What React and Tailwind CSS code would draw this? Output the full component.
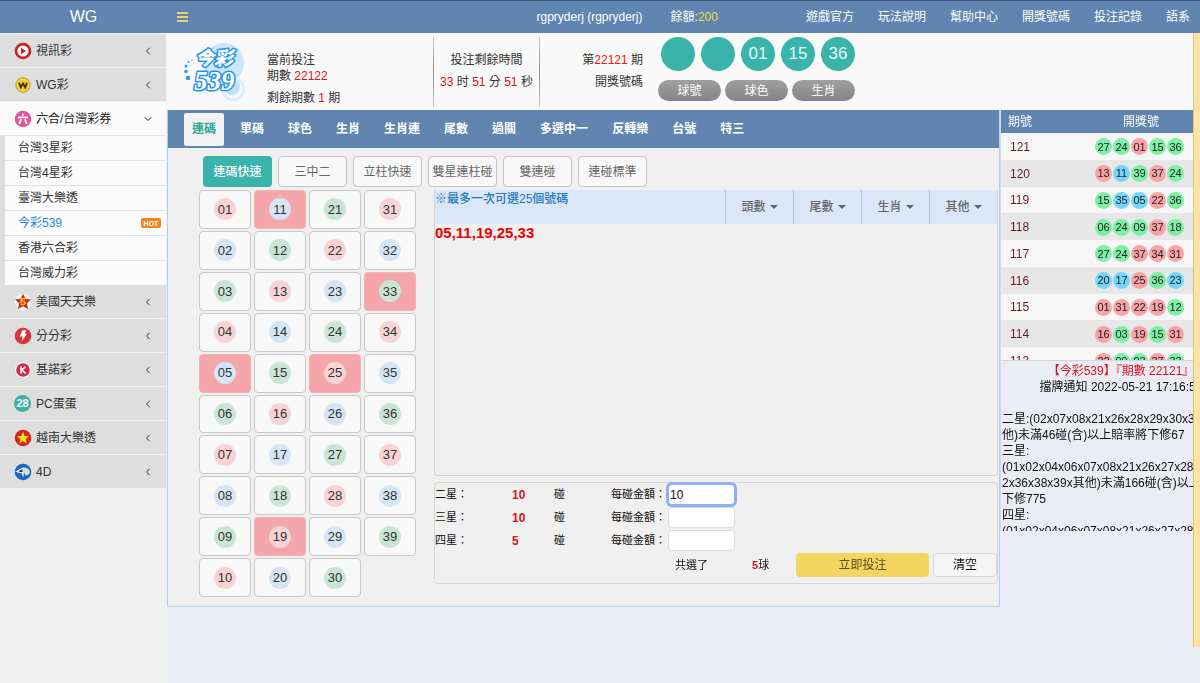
import React, { useState } from "react";
import { FiChevronLeft, FiChevronDown } from "react-icons/fi";

const NAV_LINKS = ["遊戲官方", "玩法說明", "幫助中心", "開獎號碼", "投注記錄", "語系"];

const LOTTERIES = ["台灣3星彩", "台灣4星彩", "臺灣大樂透", "今彩539", "香港六合彩", "台灣威力彩"];

const TABS = ["連碼", "單碼", "球色", "生肖", "生肖連", "尾數", "過關", "多選中一", "反轉樂", "台號", "特三"];

const MODES = ["連碼快速", "三中二", "立柱快速", "雙星連柱碰", "雙連碰", "連碰標準"];

const FILTERS = ["頭數", "尾數", "生肖", "其他"];

const RESULTS = [
  { no: "121", balls: ["27", "24", "01", "15", "36"], colors: "ggrgg" },
  { no: "120", balls: ["13", "11", "39", "37", "24"], colors: "rbgrg" },
  { no: "119", balls: ["15", "35", "05", "22", "36"], colors: "gbbrg" },
  { no: "118", balls: ["06", "24", "09", "37", "18"], colors: "gggrg" },
  { no: "117", balls: ["27", "24", "37", "34", "31"], colors: "ggrrr" },
  { no: "116", balls: ["20", "17", "25", "36", "23"], colors: "bbrgb" },
  { no: "115", balls: ["01", "31", "22", "19", "12"], colors: "rrrrg" },
  { no: "114", balls: ["16", "03", "19", "15", "31"], colors: "rgrgr" },
  { no: "113", balls: ["22", "09", "03", "37", "33"], colors: "rggrg" },
];

const NOTICE = [
  "二星:(02x07x08x21x26x28x29x30x32x其",
  "他)未滿46碰(含)以上賠率將下修67",
  "三星:",
  "(01x02x04x06x07x08x21x26x27x28x3",
  "2x36x38x39x其他)未滿166碰(含)以上賠率將",
  "下修775",
  "四星:",
  "(01x02x04x06x07x08x21x26x27x28x3",
];

const RESULT_COLORS = { r: "bg-[#f9a3a6]", g: "bg-[#7df0a5]", b: "bg-[#74d6fb]" };

// 1 red, 2 blue, 0 green
const BALL_COLORS = ["bg-[#c8e5d5]", "bg-[#f8d3d5]", "bg-[#d5e5f6]"];

const pad = (n) => String(n).padStart(2, "0");

const VideoIcon = () => (
  <svg viewBox="0 0 18 18" className="h-[18px] w-[18px]">
    <circle cx="9" cy="9" r="8.3" fill="#d0201f" />
    <circle cx="9" cy="9" r="5.6" fill="#fff" />
    <path d="M7 5.8 12 9l-5 3.2z" fill="#d0201f" />
  </svg>
);

const WgIcon = () => (
  <svg viewBox="0 0 18 18" className="h-[18px] w-[18px]">
    <circle cx="9" cy="9" r="7.2" fill="#f2c71f" stroke="#c99a14" strokeWidth="1" />
    <circle cx="9" cy="9" r="5.6" fill="none" stroke="#fbe58a" strokeWidth="0.8" />
    <path d="M5 6.6 6.8 11.4 9 7.4l2.2 4L13 6.6" fill="none" stroke="#3a2a08" strokeWidth="1.7" />
  </svg>
);

const SixIcon = () => (
  <svg viewBox="0 0 18 18" className="h-[18px] w-[18px]">
    <circle cx="9" cy="9" r="8.3" fill="#e0579f" />
    <path d="M9 3.4v2.4M4 7.3h10M7.2 9.2l-2 4.6M10.8 9.2l2 4.6" stroke="#fff" strokeWidth="1.7" fill="none" />
  </svg>
);

const StarFiveIcon = () => (
  <svg viewBox="0 0 18 18" className="h-[18px] w-[18px]">
    <circle cx="9" cy="9" r="8" fill="#fff" />
    <path d="m9 .8 2.5 5 5.5.7-4 3.8 1 5.7-5-2.8L4 16l1-5.700-4-3.800 5.500-.7z" fill="#d8261c" />
    <path d="M11.600 5.800H7.400l-.4 3c2-1 4.200-.4 4.100 1.200 0 1.700-2.700 2.100-4.300.9" fill="none" stroke="#f9c31f" strokeWidth="1.6" />
  </svg>
);

const BoltIcon = () => (
  <svg viewBox="0 0 18 18" className="h-[18px] w-[18px]">
    <circle cx="9" cy="9" r="8.3" fill="#d5343a" />
    <path d="M8.4 3.2h4l-1.6 3.6h2.2L7.4 14.8 8.6 9.6H5.6z" fill="#fff" />
  </svg>
);

const KenoIcon = () => (
  <svg viewBox="0 0 18 18" className="h-[18px] w-[18px]">
    <circle cx="9" cy="9" r="8" fill="#fff" />
    <circle cx="9" cy="9" r="6.8" fill="#d92645" />
    <path d="M7 5.6v6.8M11.6 5.6 7.6 9l4 3.4" fill="none" stroke="#fff" strokeWidth="1.7" />
  </svg>
);

const EggIcon = () => (
  <span className="flex h-[17px] w-[17px] items-center justify-center rounded-full bg-[#3ab0a4] text-[11px] leading-none font-bold text-white">
    28
  </span>
);

const VietnamIcon = () => (
  <svg viewBox="0 0 18 18" className="h-[18px] w-[18px]">
    <circle cx="9" cy="9" r="8.3" fill="#d9251f" />
    <path d="m9 2.8 1.6 4.3 4.6.2-3.6 2.8 1.2 4.4L9 12l-3.8 2.5 1.2-4.4-3.6-2.8 4.6-.2z" fill="#ffe411" />
  </svg>
);

const FourDIcon = () => (
  <svg viewBox="0 0 18 18" className="h-[18px] w-[18px]">
    <circle cx="9" cy="9" r="8.3" fill="#1c66bf" />
    <path d="M9.500 4.500c3.800 0 6.300 1.700 6.300 4.300s-2.300 3.600-4.800 3.600v-2H9.500z" fill="#d5dde6" />
    <path d="M9 4.600v8.600M9 5 2.800 8.600 9 10.200" fill="none" stroke="#fff" strokeWidth="1.300" />
    <path d="M8.300 6.500v2.800L4.600 8.400z" fill="#0d2d55" />
  </svg>
);

const TOP_MENU = [
  { name: "視訊彩", Icon: VideoIcon },
  { name: "WG彩", Icon: WgIcon },
];

const BOTTOM_MENU = [
  { name: "美國天天樂", Icon: StarFiveIcon },
  { name: "分分彩", Icon: BoltIcon },
  { name: "基諾彩", Icon: KenoIcon },
  { name: "PC蛋蛋", Icon: EggIcon },
  { name: "越南大樂透", Icon: VietnamIcon },
  { name: "4D", Icon: FourDIcon },
];

const Logo = () => (
  <svg viewBox="0 0 66 62" className="h-[62px] w-[66px]" role="img" aria-label="今彩539">
    <circle cx="41" cy="22" r="20" fill="#c9e6fa" />
    <circle cx="50" cy="48" r="12" fill="#dcebf7" />
    <circle cx="50" cy="48" r="9.5" fill="#f7fafc" />
    <circle cx="49" cy="46" r="8" fill="#bfe0f8" />
    <g fill="#2a97e8">
      <circle cx="9" cy="19" r="0.8" />
      <circle cx="5.5" cy="21" r="1.1" />
      <circle cx="3" cy="25" r="1.5" />
      <circle cx="3" cy="30.5" r="1.8" />
      <circle cx="5" cy="37" r="2.2" />
    </g>
    <g fill="#fff" stroke="#1c93ec" strokeLinejoin="round" paintOrder="stroke">
      <text
        x="12"
        y="24"
        fontSize="19"
        fontWeight="900"
        fontStyle="italic"
        fontFamily="'Noto Sans CJK TC', sans-serif"
        strokeWidth="3"
      >
        今彩
      </text>
      <text
        x="11"
        y="49"
        fontSize="27"
        fontWeight="700"
        fontStyle="italic"
        fontFamily="'Liberation Serif', serif"
        strokeWidth="3"
      >
        539
      </text>
    </g>
  </svg>
);

const MenuItem = ({ name, Icon }) => (
  <button
    type="button"
    className="flex h-[34px] w-full items-center border-b border-[#efefef] bg-[#dedede] pr-3 pl-[14px] text-left"
  >
    <span className="flex w-[22px] items-center">
      <Icon />
    </span>
    <span className="flex-1">{name}</span>
    <FiChevronLeft className="h-3 w-3" />
  </button>
);

const Sidebar = () => (
  <aside className="w-[167px] shrink-0 bg-[#f0f0f0] pt-px pr-px">
    {TOP_MENU.map((item) => (
      <MenuItem key={item.name} {...item} />
    ))}
    <button
      type="button"
      className="flex h-[34px] w-full items-center border-b border-[#e2e2e2] bg-[#fbfbfb] pr-3 pl-[14px] text-left text-[#222]"
    >
      <span className="flex w-[22px] items-center">
        <SixIcon />
      </span>
      <span className="flex-1">六合/台灣彩券</span>
      <FiChevronDown className="h-3 w-3" />
    </button>
    <ul className="border-l-5 border-[#dedede] bg-[#fbfbfb]">
      {LOTTERIES.map((name) => (
        <li key={name} className="border-b border-[#e2e2e2] last:border-b-0">
          <a
            href="#"
            className={
              name === "今彩539"
                ? "flex h-6 items-center justify-between pr-[5px] pl-[13px] text-[#2a86e0]"
                : "flex h-6 items-center pl-[13px]"
            }
          >
            {name}
            {name === "今彩539" && (
              <span className="flex h-[10px] w-5 items-center justify-center rounded-xs bg-[#f58220] text-[7px] leading-none font-bold text-white">
                HOT
              </span>
            )}
          </a>
        </li>
      ))}
    </ul>
    {BOTTOM_MENU.map((item) => (
      <MenuItem key={item.name} {...item} />
    ))}
  </aside>
);

const Header = () => (
  <header className="flex h-[33px] items-center border-t border-[#3c5a80] bg-[#5f85b0] text-white">
    <div className="w-[167px] shrink-0 text-center text-base leading-none">WG</div>
    <button type="button" aria-label="menu" className="ml-[10px] flex w-[11px] flex-col gap-[2px]">
      <span className="h-[2px] bg-[#e5d570]" />
      <span className="h-[2px] bg-[#e5d570]" />
      <span className="h-[2px] bg-[#e5d570]" />
    </button>
    <div className="flex flex-1 justify-end gap-7 pr-[88px]">
      <span>rgpryderj (rgpryderj)</span>
      <span>
        餘額:<span className="text-[#f0dc3c]">200</span>
      </span>
    </div>
    <nav className="flex gap-6 pr-[10px]">
      {NAV_LINKS.map((link) => (
        <a key={link} href="#">
          {link}
        </a>
      ))}
    </nav>
  </header>
);

const DrawInfo = () => (
  <section className="flex h-[77px] items-center bg-[#f9f9f9] pt-px pl-4">
    <Logo />
    <div className="ml-[18px] w-[166px] pt-[14px] leading-4">
      <p>當前投注</p>
      <p>
        期數 <span className="text-[#d8121c]">22122</span>
      </p>
      <p className="mt-[6px]">
        剩餘期數 <span className="text-[#d8121c]">1</span> 期
      </p>
    </div>
    <div className="h-[70px] w-px bg-linear-to-b from-[#ccc] via-[#888] to-[#ccc]" />
    <div className="w-[105px] pb-[2px] text-center leading-[22px]">
      <p>投注剩餘時間</p>
      <p>
        <span className="text-[#d8121c]">33</span> 时 <span className="text-[#d8121c]">51</span> 分{" "}
        <span className="text-[#d8121c]">51</span> 秒
      </p>
    </div>
    <div className="h-[70px] w-px bg-linear-to-b from-[#ccc] via-[#888] to-[#ccc]" />
    <div className="w-[103px] pb-[2px] text-right leading-[22px]">
      <p>
        第<span className="text-[#f01414]">22121</span> 期
      </p>
      <p>開獎號碼</p>
    </div>
    <div className="ml-[15px] flex flex-col gap-[9px] pb-[6px]">
      <div className="flex gap-[6px] pl-[3px] text-[17px] text-[#e4fbf8]">
        {["", "", "01", "15", "36"].map((ball, i) => (
          <span key={i} className="flex h-[34px] w-[34px] items-center justify-center rounded-full bg-[#3ab3aa]">
            {ball}
          </span>
        ))}
      </div>
      <div className="flex gap-1 text-white">
        {["球號", "球色", "生肖"].map((label) => (
          <button
            key={label}
            type="button"
            className="h-[21px] w-[63px] rounded-full bg-linear-to-b from-[#a0a0a0] to-[#848484]"
          >
            {label}
          </button>
        ))}
      </div>
    </div>
  </section>
);

const NumberGrid = ({ picked, onToggle }) => (
  <div className="grid h-[407px] grid-flow-col grid-cols-[repeat(4,52px)] grid-rows-10 gap-x-[3px] gap-y-[2px] text-[13px]">
    {Array.from({ length: 39 }, (_, i) => i + 1).map((n) => (
      <button
        key={n}
        type="button"
        onClick={() => onToggle(n)}
        className={
          picked.includes(n)
            ? "flex items-center justify-center rounded-sm border border-[#f5b0b3] bg-[#f5a6aa]"
            : "flex items-center justify-center rounded-sm border border-[#c8c8c8] bg-[#f8f8f8]"
        }
      >
        <span className={`flex h-[22px] w-[22px] items-center justify-center rounded-full ${BALL_COLORS[n % 3]}`}>
          {pad(n)}
        </span>
      </button>
    ))}
  </div>
);

const StakeRow = ({ label, count, id, value, onChange, autoFocus }) => (
  <div className="grid h-[23px] grid-cols-[77px_42px_57px_57px_68px] items-center">
    <span>{label}：</span>
    <span className="text-xs font-bold text-[#d8121c]">{count}</span>
    <span>碰</span>
    <label htmlFor={id}>每碰金額：</label>
    <input
      id={id}
      type="text"
      value={value}
      autoFocus={autoFocus}
      onFocus={(e) => e.target.setSelectionRange(e.target.value.length, e.target.value.length)}
      onChange={(e) => onChange(e.target.value)}
      className="h-[21px] w-[67px] rounded-sm border border-[#dcdcdc] bg-white pl-px text-xs outline-none focus:border-[#8fb0ee] focus:ring-2 focus:ring-[#8fb0ee]"
    />
  </div>
);

const BetPanel = ({ picked, onClear }) => {
  const [stakes, setStakes] = useState({ two: "10", three: "", four: "" });
  const n = picked.length;
  const rows = [
    { key: "two", label: "二星", count: (n * (n - 1)) / 2 },
    { key: "three", label: "三星", count: (n * (n - 1) * (n - 2)) / 6 },
    { key: "four", label: "四星", count: (n * (n - 1) * (n - 2) * (n - 3)) / 24 },
  ];

  return (
    <div className="min-w-0 flex-1">
      <div className="h-[286px] rounded-b-sm border-x border-b border-[#d5d5d5]">
        <div className="flex h-[34px] bg-[#dbe7f8]">
          <p className="flex-1 leading-[18px] font-medium text-[#1f78b8]">※最多一次可選25個號碼</p>
          {FILTERS.map((label) => (
            <button
              key={label}
              type="button"
              className="flex w-[68px] items-center justify-center gap-1 border-l border-[#bcc3cd] font-medium text-[#666]"
            >
              {label}
              <svg viewBox="0 0 8 4" className="h-1 w-2" fill="currentColor">
                <path d="M0 0h8L4 4z" />
              </svg>
            </button>
          ))}
        </div>
        <p className="text-[15px] leading-[18px] font-bold text-[#f00000]">{picked.map(pad).join(",")}</p>
      </div>
      <div className="mt-[6px] h-[102px] rounded-sm border border-[#d5d5d5] text-[11px] text-[#111]">
        {rows.map((row) => (
          <StakeRow
            key={row.key}
            id={row.key}
            label={row.label}
            count={row.count}
            value={stakes[row.key]}
            autoFocus={row.key === "two"}
            onChange={(value) => setStakes({ ...stakes, [row.key]: value })}
          />
        ))}
        <div className="mt-px flex items-center justify-end">
          <span className="w-[77px]">共選了</span>
          <span className="w-11">
            <b className="text-[#d8121c]">{n}</b>球
          </span>
          <button type="button" className="h-6 w-[133px] rounded-sm bg-[#f5d561] text-xs text-[#5a4d1c]">
            立即投注
          </button>
          <button
            type="button"
            onClick={onClear}
            className="ml-1 h-6 w-16 rounded-sm border border-[#d5d5d5] bg-[#f5f5f5] text-xs"
          >
            清空
          </button>
        </div>
      </div>
    </div>
  );
};

const Results = () => (
  <aside className="w-[193px] shrink-0 overflow-hidden border-l border-[#d5d9e0]">
    <div className="h-[250px] overflow-hidden">
      <div className="flex h-[23px] items-center bg-[#5f85b0] text-white">
        <span className="flex-1 pl-[7px]">期號</span>
        <span className="w-[70px]">開獎號</span>
      </div>
      <table className="h-[241px] w-full border-collapse">
        <tbody>
          {RESULTS.map((row) => (
            <tr key={row.no} className="bg-[#f6f6f6] even:bg-[#e7e7e7]">
              <td className="p-0 pt-px pl-[9px] text-[#6b1c22]">{row.no}</td>
              <td className="p-0 pt-px pr-[9px]">
                <div className="flex justify-end gap-px">
                  {row.balls.map((ball, i) => (
                    <span
                      key={i}
                      className={`flex h-[17px] w-[17px] items-center justify-center rounded-full text-[11px] text-[#222] ${RESULT_COLORS[row.colors[i]]}`}
                    >
                      {ball}
                    </span>
                  ))}
                </div>
              </td>
            </tr>
          ))}
        </tbody>
      </table>
    </div>
    <div className="h-[171px] overflow-hidden border-t border-[#cdd5e2] pt-[2px] pl-px leading-4 text-[#111]">
      <div className="w-[238px] whitespace-nowrap">
        <p className="text-center text-[#d8121c]">【今彩539】『期數 22121』</p>
        <p className="mb-4 text-center">擋牌通知 2022-05-21 17:16:52</p>
        {NOTICE.map((line, i) => (
          <p key={i}>{line}</p>
        ))}
      </div>
    </div>
  </aside>
);

const App = () => {
  const [picked, setPicked] = useState([5, 11, 19, 25, 33]);
  const [tab, setTab] = useState("連碼");
  const [mode, setMode] = useState("連碼快速");

  const toggle = (n) => {
    setPicked((prev) => (prev.includes(n) ? prev.filter((p) => p !== n) : [...prev, n].sort((a, b) => a - b)));
  };

  return (
    <div className="flex min-h-screen flex-col bg-[#eaedf6] font-['Liberation_Sans','Noto_Sans_CJK_TC',sans-serif] text-xs text-[#333]">
      <Header />
      <div className="flex flex-1">
        <Sidebar />
        <div className="min-w-0 flex-1">
          <DrawInfo />
          <div className="flex items-start">
            <main className="min-w-0 flex-1 border border-t-0 border-[#b3d0ee] bg-[#f0f0f0] pb-[9px]">
              <div className="flex h-[38px] items-center gap-2 bg-[#5f85b0] pl-4">
                {TABS.map((name) => (
                  <button
                    key={name}
                    type="button"
                    onClick={() => setTab(name)}
                    className={
                      name === tab
                        ? "h-[33px] rounded-xs bg-[#f2f2f2] px-2 font-bold text-[#2ba698]"
                        : "h-[33px] px-2 font-bold text-white"
                    }
                  >
                    {name}
                  </button>
                ))}
              </div>
              <div className="flex gap-[6px] pt-2 pl-[35px]">
                {MODES.map((name) => (
                  <button
                    key={name}
                    type="button"
                    onClick={() => setMode(name)}
                    className={
                      name === mode
                        ? "h-[31px] w-[69px] rounded-sm bg-[#3ab3aa] font-medium whitespace-nowrap text-white"
                        : "h-[31px] w-[69px] rounded-sm border border-[#c4c4c4] bg-[#f8f8f8] whitespace-nowrap text-[#666]"
                    }
                  >
                    {name}
                  </button>
                ))}
              </div>
              <div className="flex gap-[18px] pt-[3px] pr-px pl-[31px]">
                <NumberGrid picked={picked} onToggle={toggle} />
                <BetPanel picked={picked} onClear={() => setPicked([])} />
              </div>
            </main>
            <Results />
          </div>
        </div>
        <div className="mb-9 w-[7px] shrink-0 border-l border-[#dfc27c] bg-[#fde3a6]" />
      </div>
    </div>
  );
};

export default App;
